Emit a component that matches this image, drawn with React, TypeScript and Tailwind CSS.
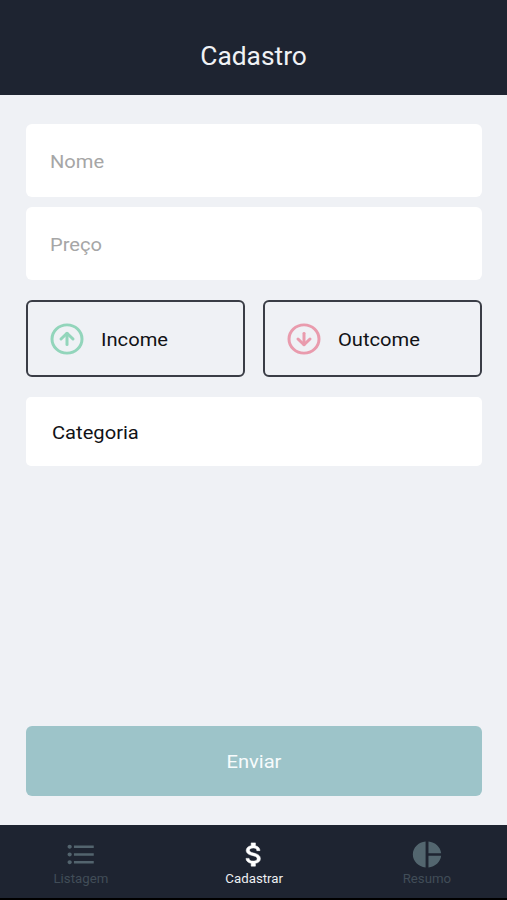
import React from 'react';
import { MdAttachMoney, MdFormatListBulleted, MdPieChart } from 'react-icons/md';
import { FiArrowDownCircle, FiArrowUpCircle } from 'react-icons/fi';

const Header: React.FC = () => (
  <header className="flex h-[95px] items-center justify-center bg-[#1e2431] pt-[18px]">
    <h1 className="scale-x-[1.055] text-[25px] leading-8 text-[#f0f2f5]">Cadastro</h1>
  </header>
);

const Field: React.FC<{ placeholder: string }> = ({ placeholder }) => (
  <div className="flex h-[73px] items-center rounded-[6px] bg-white pt-[2px] pl-6">
    <input
      className="w-[380px] origin-left scale-x-[1.06] bg-transparent text-[19px] leading-6 outline-none placeholder:text-[#a6a6a6]"
      placeholder={placeholder}
    />
  </div>
);

const TransactionTypes: React.FC = () => {
  const types = [
    { name: 'Income', Icon: FiArrowUpCircle, color: 'text-[#92d5bb]' },
    { name: 'Outcome', Icon: FiArrowDownCircle, color: 'text-[#e99bad]' },
  ];

  return (
    <div className="mt-5 grid grid-cols-2 gap-[18px]">
      {types.map(({ name, Icon, color }) => (
        <button
          key={name}
          className="flex h-[77px] items-center rounded-[6px] border-2 border-[#3a3d46] pl-[21px]"
        >
          <Icon className={`h-[34px] w-9 ${color}`} preserveAspectRatio="none" />
          <span className="mt-[2px] ml-4 origin-left scale-x-[1.06] text-[19px] leading-6 text-[#111216]">{name}</span>
        </button>
      ))}
    </div>
  );
};

const TabBar: React.FC = () => {
  const tabs = [
    { name: 'Listagem', Icon: MdFormatListBulleted, icon: 'text-[#53646e]', label: 'text-[#414d58]' },
    {
      name: 'Cadastrar',
      Icon: MdAttachMoney,
      // the first path is the icon's empty bounding box
      icon: 'text-white stroke-white stroke-[0.4] [stroke-linejoin:round] [&>path:first-child]:stroke-none',
      label: 'text-[#eef0f3]',
    },
    { name: 'Resumo', Icon: MdPieChart, icon: 'text-[#53666f]', label: 'text-[#414d58]' },
  ];

  return (
    <nav className="flex h-[75px] justify-between border-b-2 border-black bg-[#1e2431] px-10 pt-[14px]">
      {tabs.map(({ name, Icon, icon, label }) => (
        <a key={name} className="flex w-[81px] flex-col items-center">
          <Icon className={`h-[31px] w-[34px] shrink-0 ${icon}`} preserveAspectRatio="none" />
          <span className={`mt-px ml-px scale-x-[1.06] text-[12.5px] leading-4 ${label}`}>{name}</span>
        </a>
      ))}
    </nav>
  );
};

const App: React.FC = () => {
  return (
    <div className="flex h-screen flex-col bg-[#eff1f5] font-['Roboto',sans-serif]">
      <Header />

      <main className="flex flex-1 flex-col pt-[29px] pr-[25px] pb-[29px] pl-[26px]">
        <div className="flex flex-col gap-[10px]">
          <Field placeholder="Nome" />
          <Field placeholder="Preço" />
        </div>

        <TransactionTypes />

        <button className="mt-5 flex h-[69px] items-center rounded-[5px] bg-white pt-[2px] pl-[26px]">
          <span className="origin-left scale-x-[1.06] text-[19px] leading-6 text-[#111216]">Categoria</span>
        </button>

        <button className="mt-auto flex h-[70px] items-center justify-center rounded-[6px] bg-[#9dc4c9] pt-[2px]">
          <span className="scale-x-[1.06] text-[19px] leading-6 text-[#f7fbfc]">Enviar</span>
        </button>
      </main>

      <TabBar />
    </div>
  );
};

export default App;
